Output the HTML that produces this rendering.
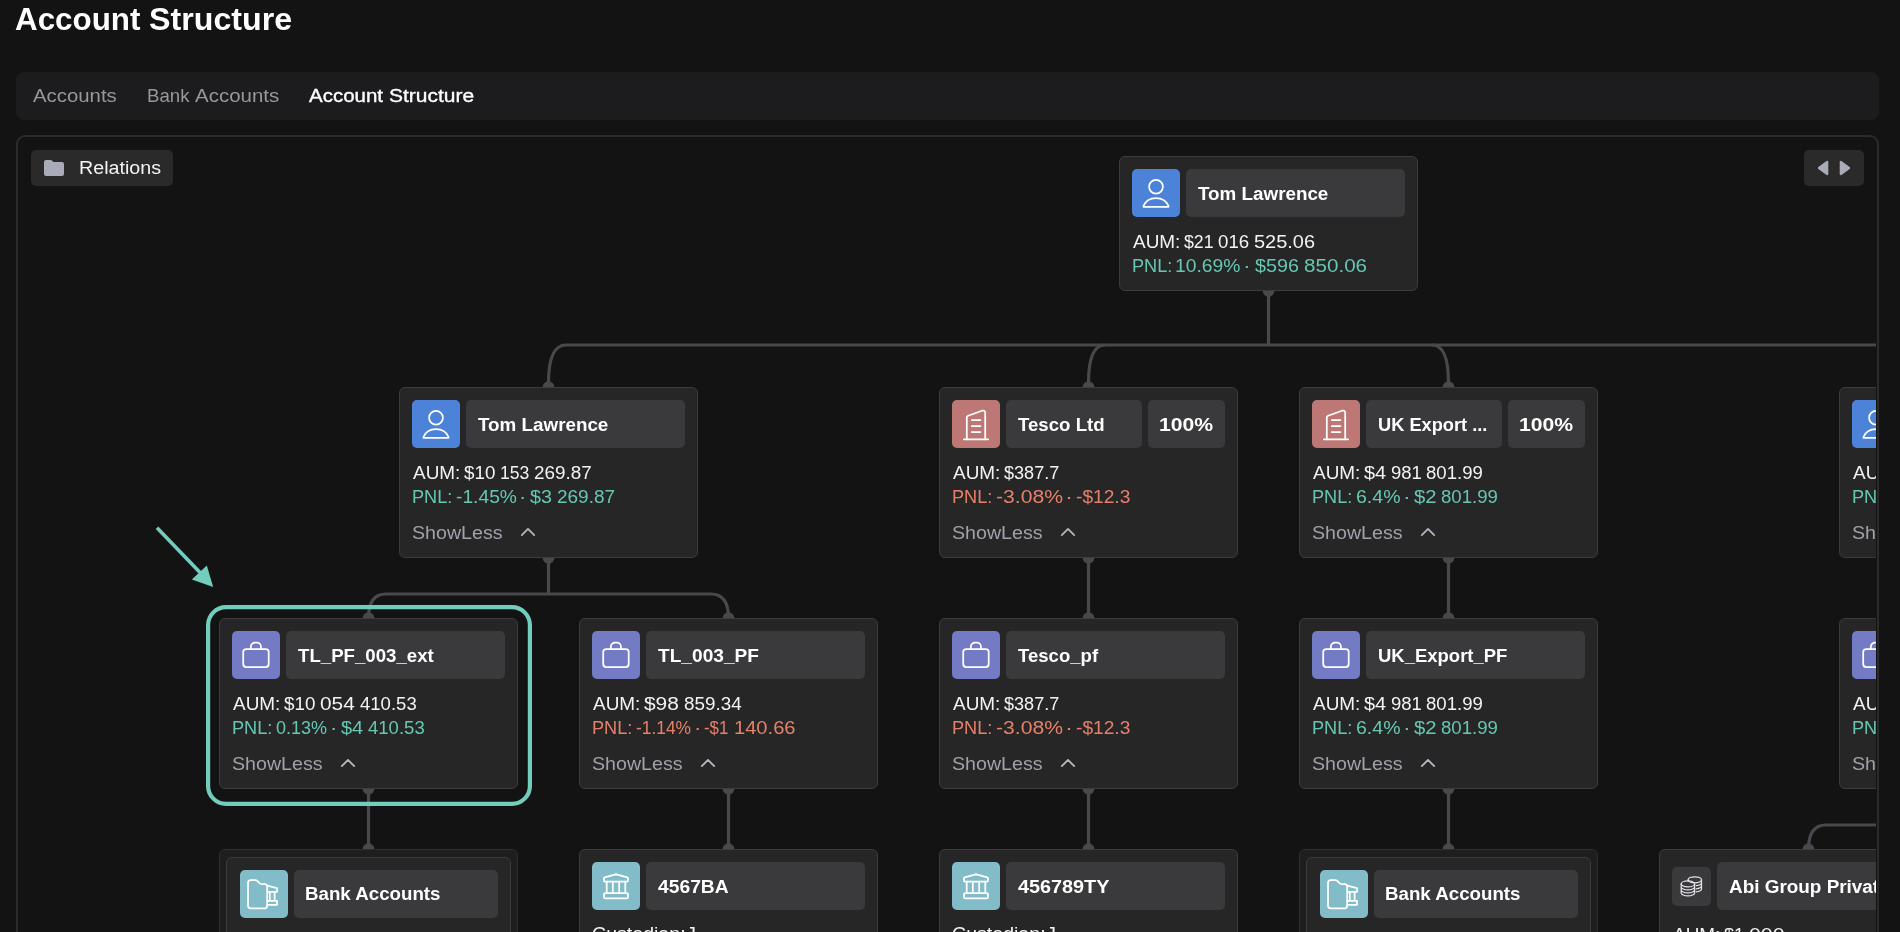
<!DOCTYPE html>
<html><head><meta charset="utf-8"><title>Account Structure</title>
<style>
*{box-sizing:border-box}
html,body{margin:0;padding:0}
body{width:1900px;height:932px;overflow:hidden;background:#131313;font-family:"Liberation Sans",sans-serif;color:#f3f3f3;position:relative}
#root{position:absolute;left:0;top:0;width:1900px;height:932px;overflow:hidden;will-change:transform}
.tx{position:absolute;white-space:nowrap;transform-origin:0 50%}
.tabs{position:absolute;left:16px;top:72px;width:1863px;height:48px;background:#1c1c1e;border-radius:8px}
.panel{position:absolute;left:16px;top:135px;width:1863px;height:830px;border:2px solid #2b2b2d;border-radius:9px;overflow:hidden}
.inner{position:absolute;left:0;top:0;width:1858px;height:826px;overflow:hidden}
.btn{position:absolute;height:36px;background:#2a2a2b;border-radius:5px}
.links{position:absolute;left:0;top:0}
.card{position:absolute;width:299px;background:#262627;border:1px solid #3c3c3f;border-radius:6px;overflow:hidden}
.grp{position:absolute;width:299px;height:171px;background:#1e1e1f;border:1px solid #2e2e30;border-radius:6px}
.ic{position:absolute;left:12px;top:12px;width:48px;height:48px;border-radius:5px}
.ic svg{display:block}
.ic.sm{width:39px;height:39px;top:17px;background:#3a3a3c;border-radius:5px}
.nm{position:absolute;left:66px;top:12px;height:48px;background:#3a3a3c;border-radius:5px}
.w{color:#fff}
.aum{color:#f3f3f3}
.g{color:#66c7b2}
.r{color:#e6806a}
.sl{color:#a0a1ab}
.tab{color:#97979d}
.chev{position:absolute;left:120px;top:139px}
.ann{position:absolute;left:0;top:0}
</style></head>
<body>
<div id="root">
<div class="tx w" style="left:15.30px;top:0px;font-size:31px;line-height:40px;font-weight:700;transform:scaleX(1.0117);">Account</div><div class="tx w" style="left:149.01px;top:0px;font-size:31px;line-height:40px;font-weight:700;transform:scaleX(1.0384);">Structure</div>
<div class="tabs"><div class="tx tab" style="left:17.20px;top:0px;font-size:18px;line-height:48px;font-weight:400;transform:scaleX(1.1308);">Accounts</div><div class="tx tab" style="left:130.65px;top:0px;font-size:18px;line-height:48px;font-weight:400;transform:scaleX(1.0353);">Bank</div><div class="tx tab" style="left:178.60px;top:0px;font-size:18px;line-height:48px;font-weight:400;transform:scaleX(1.1376);">Accounts</div><div class="tx w" style="left:293.10px;top:0px;font-size:18px;line-height:48px;font-weight:400;transform:scaleX(1.1387);-webkit-text-stroke:.35px #fff;">Account</div><div class="tx w" style="left:372.67px;top:0px;font-size:18px;line-height:48px;font-weight:400;transform:scaleX(1.1650);-webkit-text-stroke:.35px #fff;">Structure</div></div>
<div class="panel">
<div class="inner">
<svg class="links" width="1860" height="800" viewBox="0 0 1860 800" fill="none" stroke="#49494d" stroke-width="3.2"><path d="M1250.5 154 V208"/><path d="M530.5 250 V246 Q530.5 208 548 208 H1862"/><path d="M1070.5 250 V246 Q1070.5 208 1087 208"/><path d="M1430.5 250 V246 Q1430.5 208 1414 208"/><path d="M530.5 421 V457"/><path d="M350.5 481 Q350.5 457 368 457 H693 Q710.5 457 710.5 481"/><path d="M1070.5 421 V481"/><path d="M1430.5 421 V481"/><path d="M350.5 652 V712"/><path d="M710.5 652 V712"/><path d="M1070.5 652 V712"/><path d="M1430.5 652 V712"/><path d="M1790.5 712 Q1790.5 688 1808 688 H1862"/><circle cx="1250.5" cy="154" r="5.8" fill="#49494d" stroke="none"/><circle cx="530.5" cy="250" r="5.8" fill="#49494d" stroke="none"/><circle cx="1070.5" cy="250" r="5.8" fill="#49494d" stroke="none"/><circle cx="1430.5" cy="250" r="5.8" fill="#49494d" stroke="none"/><circle cx="530.5" cy="421" r="5.8" fill="#49494d" stroke="none"/><circle cx="1070.5" cy="421" r="5.8" fill="#49494d" stroke="none"/><circle cx="1430.5" cy="421" r="5.8" fill="#49494d" stroke="none"/><circle cx="350.5" cy="481" r="5.8" fill="#49494d" stroke="none"/><circle cx="710.5" cy="481" r="5.8" fill="#49494d" stroke="none"/><circle cx="1070.5" cy="481" r="5.8" fill="#49494d" stroke="none"/><circle cx="1430.5" cy="481" r="5.8" fill="#49494d" stroke="none"/><circle cx="350.5" cy="652" r="5.8" fill="#49494d" stroke="none"/><circle cx="710.5" cy="652" r="5.8" fill="#49494d" stroke="none"/><circle cx="1070.5" cy="652" r="5.8" fill="#49494d" stroke="none"/><circle cx="1430.5" cy="652" r="5.8" fill="#49494d" stroke="none"/><circle cx="350.5" cy="712" r="5.8" fill="#49494d" stroke="none"/><circle cx="710.5" cy="712" r="5.8" fill="#49494d" stroke="none"/><circle cx="1070.5" cy="712" r="5.8" fill="#49494d" stroke="none"/><circle cx="1430.5" cy="712" r="5.8" fill="#49494d" stroke="none"/><circle cx="1790.5" cy="712" r="5.8" fill="#49494d" stroke="none"/></svg>
<div class="card" style="left:1101px;top:19px;height:135px"><div class="ic" style="background:#4c82d8"><svg width="48" height="48" viewBox="0 0 48 48" fill="none" stroke="#fff" stroke-width="1.75" stroke-linecap="round" stroke-linejoin="round"><circle cx="24" cy="17.8" r="6.9"/><path d="M11.6 37.9 Q11.3 37.9 11.4 37 C13.5 32 18.5 29 24 29 C29.5 29 34.5 32 36.6 37 Q36.7 37.9 36.4 37.9 Z"/></svg></div><div class="nm" style="width:219px"></div><div class="tx w" style="left:78.49px;top:12.6px;font-size:18px;line-height:48px;font-weight:700;transform:scaleX(1.0452);">Tom Lawrence</div><div class="tx aum" style="left:12.60px;top:73px;font-size:18px;line-height:24px;font-weight:400;transform:scaleX(1.0530);">AUM:</div><div class="tx aum" style="left:63.70px;top:73px;font-size:18px;line-height:24px;font-weight:400;transform:scaleX(0.9863);">$21</div><div class="tx aum" style="left:98.27px;top:73px;font-size:18px;line-height:24px;font-weight:400;transform:scaleX(1.0385);">016</div><div class="tx aum" style="left:134.22px;top:73px;font-size:18px;line-height:24px;font-weight:400;transform:scaleX(1.1082);">525.06</div><div class="tx g" style="left:11.69px;top:97px;font-size:18px;line-height:24px;font-weight:400;transform:scaleX(1.0081);">PNL:</div><div class="tx g" style="left:55.11px;top:97px;font-size:18px;line-height:24px;font-weight:400;transform:scaleX(1.0711);">10.69%</div><div class="tx g" style="left:123.32px;top:97px;font-size:18px;line-height:24px;font-weight:400;transform:scaleX(1.2778);">·</div><div class="tx g" style="left:134.89px;top:97px;font-size:18px;line-height:24px;font-weight:400;transform:scaleX(1.0969);">$596</div><div class="tx g" style="left:184.20px;top:97px;font-size:18px;line-height:24px;font-weight:400;transform:scaleX(1.1455);">850.06</div></div>
<div class="card" style="left:381px;top:250px;height:171px"><div class="ic" style="background:#4c82d8"><svg width="48" height="48" viewBox="0 0 48 48" fill="none" stroke="#fff" stroke-width="1.75" stroke-linecap="round" stroke-linejoin="round"><circle cx="24" cy="17.8" r="6.9"/><path d="M11.6 37.9 Q11.3 37.9 11.4 37 C13.5 32 18.5 29 24 29 C29.5 29 34.5 32 36.6 37 Q36.7 37.9 36.4 37.9 Z"/></svg></div><div class="nm" style="width:219px"></div><div class="tx w" style="left:78.49px;top:12.6px;font-size:18px;line-height:48px;font-weight:700;transform:scaleX(1.0452);">Tom Lawrence</div><div class="tx aum" style="left:12.60px;top:73px;font-size:18px;line-height:24px;font-weight:400;transform:scaleX(1.0530);">AUM:</div><div class="tx aum" style="left:63.70px;top:73px;font-size:18px;line-height:24px;font-weight:400;transform:scaleX(1.0444);">$10</div><div class="tx aum" style="left:100.03px;top:73px;font-size:18px;line-height:24px;font-weight:400;transform:scaleX(0.9786);">153</div><div class="tx aum" style="left:133.66px;top:73px;font-size:18px;line-height:24px;font-weight:400;transform:scaleX(1.0488);">269.87</div><div class="tx g" style="left:11.69px;top:97px;font-size:18px;line-height:24px;font-weight:400;transform:scaleX(1.0081);">PNL:</div><div class="tx g" style="left:55.65px;top:97px;font-size:18px;line-height:24px;font-weight:400;transform:scaleX(1.0683);">-1.45%</div><div class="tx g" style="left:119.23px;top:97px;font-size:18px;line-height:24px;font-weight:400;transform:scaleX(1.2222);">·</div><div class="tx g" style="left:130.49px;top:97px;font-size:18px;line-height:24px;font-weight:400;transform:scaleX(1.0990);">$3</div><div class="tx g" style="left:157.05px;top:97px;font-size:18px;line-height:24px;font-weight:400;transform:scaleX(1.0544);">269.87</div><div class="tx sl" style="left:11.73px;top:133px;font-size:18px;line-height:24px;font-weight:400;transform:scaleX(1.0907);">ShowLess</div><svg class="chev" width="16" height="10" viewBox="0 0 16 10" fill="none" stroke="#b2b3bd" stroke-width="1.9" stroke-linecap="round" stroke-linejoin="round"><path d="M1.8 8.1 L8 1.9 L14.2 8.1"/></svg></div>
<div class="card" style="left:921px;top:250px;height:171px"><div class="ic" style="background:#bd7875"><svg width="48" height="48" viewBox="0 0 48 48" fill="none" stroke="#fff" stroke-width="1.75" stroke-linecap="round" stroke-linejoin="round"><path d="M14.8 39.3 V17.6 Q14.8 16.2 16.1 15.7 L30 10.7 Q33.2 9.8 33.2 13.2 V39.3"/><path d="M11.8 39.3 H36.2 M19.8 20 H28.4 M19.8 26 H28.4 M19.8 32 H28.4"/></svg></div><div class="nm" style="width:135.5px"></div><div class="nm" style="left:208px;width:77px"></div><div class="tx w" style="left:218.56px;top:12.6px;font-size:18px;line-height:48px;font-weight:700;transform:scaleX(1.1753);">100%</div><div class="tx w" style="left:78.49px;top:12.6px;font-size:18px;line-height:48px;font-weight:700;transform:scaleX(1.0352);">Tesco Ltd</div><div class="tx aum" style="left:12.60px;top:73px;font-size:18px;line-height:24px;font-weight:400;transform:scaleX(1.0530);">AUM:</div><div class="tx aum" style="left:63.70px;top:73px;font-size:18px;line-height:24px;font-weight:400;transform:scaleX(1.0037);">$387.7</div><div class="tx r" style="left:11.69px;top:97px;font-size:18px;line-height:24px;font-weight:400;transform:scaleX(1.0081);">PNL:</div><div class="tx r" style="left:55.56px;top:97px;font-size:18px;line-height:24px;font-weight:400;transform:scaleX(1.1745);">-3.08%</div><div class="tx r" style="left:124.80px;top:97px;font-size:18px;line-height:24px;font-weight:400;transform:scaleX(1.3333);">·</div><div class="tx r" style="left:135.65px;top:97px;font-size:18px;line-height:24px;font-weight:400;transform:scaleX(1.0646);">-$12.3</div><div class="tx sl" style="left:11.73px;top:133px;font-size:18px;line-height:24px;font-weight:400;transform:scaleX(1.0907);">ShowLess</div><svg class="chev" width="16" height="10" viewBox="0 0 16 10" fill="none" stroke="#b2b3bd" stroke-width="1.9" stroke-linecap="round" stroke-linejoin="round"><path d="M1.8 8.1 L8 1.9 L14.2 8.1"/></svg></div>
<div class="card" style="left:1281px;top:250px;height:171px"><div class="ic" style="background:#bd7875"><svg width="48" height="48" viewBox="0 0 48 48" fill="none" stroke="#fff" stroke-width="1.75" stroke-linecap="round" stroke-linejoin="round"><path d="M14.8 39.3 V17.6 Q14.8 16.2 16.1 15.7 L30 10.7 Q33.2 9.8 33.2 13.2 V39.3"/><path d="M11.8 39.3 H36.2 M19.8 20 H28.4 M19.8 26 H28.4 M19.8 32 H28.4"/></svg></div><div class="nm" style="width:135.5px"></div><div class="nm" style="left:208px;width:77px"></div><div class="tx w" style="left:218.56px;top:12.6px;font-size:18px;line-height:48px;font-weight:700;transform:scaleX(1.1753);">100%</div><div class="tx w" style="left:77.69px;top:12.6px;font-size:18px;line-height:48px;font-weight:700;transform:scaleX(1.0123);">UK Export ...</div><div class="tx aum" style="left:12.60px;top:73px;font-size:18px;line-height:24px;font-weight:400;transform:scaleX(1.0530);">AUM:</div><div class="tx aum" style="left:63.69px;top:73px;font-size:18px;line-height:24px;font-weight:400;transform:scaleX(1.1031);">$4</div><div class="tx aum" style="left:90.98px;top:73px;font-size:18px;line-height:24px;font-weight:400;transform:scaleX(1.0282);">981</div><div class="tx aum" style="left:125.98px;top:73px;font-size:18px;line-height:24px;font-weight:400;transform:scaleX(1.0318);">801.99</div><div class="tx g" style="left:11.69px;top:97px;font-size:18px;line-height:24px;font-weight:400;transform:scaleX(1.0081);">PNL:</div><div class="tx g" style="left:55.52px;top:97px;font-size:18px;line-height:24px;font-weight:400;transform:scaleX(1.0861);">6.4%</div><div class="tx g" style="left:102.92px;top:97px;font-size:18px;line-height:24px;font-weight:400;transform:scaleX(1.2778);">·</div><div class="tx g" style="left:114.29px;top:97px;font-size:18px;line-height:24px;font-weight:400;transform:scaleX(1.1257);">$2</div><div class="tx g" style="left:141.48px;top:97px;font-size:18px;line-height:24px;font-weight:400;transform:scaleX(1.0336);">801.99</div><div class="tx sl" style="left:11.73px;top:133px;font-size:18px;line-height:24px;font-weight:400;transform:scaleX(1.0907);">ShowLess</div><svg class="chev" width="16" height="10" viewBox="0 0 16 10" fill="none" stroke="#b2b3bd" stroke-width="1.9" stroke-linecap="round" stroke-linejoin="round"><path d="M1.8 8.1 L8 1.9 L14.2 8.1"/></svg></div>
<div class="card" style="left:1821px;top:250px;height:171px"><div class="ic" style="background:#4c82d8"><svg width="48" height="48" viewBox="0 0 48 48" fill="none" stroke="#fff" stroke-width="1.75" stroke-linecap="round" stroke-linejoin="round"><circle cx="24" cy="17.8" r="6.9"/><path d="M11.6 37.9 Q11.3 37.9 11.4 37 C13.5 32 18.5 29 24 29 C29.5 29 34.5 32 36.6 37 Q36.7 37.9 36.4 37.9 Z"/></svg></div><div class="nm" style="width:219px"></div><div class="tx w" style="left:78.49px;top:12.6px;font-size:18px;line-height:48px;font-weight:700;transform:scaleX(1.0452);">Tom Lawrence</div><div class="tx aum" style="left:12.60px;top:73px;font-size:18px;line-height:24px;font-weight:400;transform:scaleX(1.0530);">AUM:</div><div class="tx g" style="left:11.69px;top:97px;font-size:18px;line-height:24px;font-weight:400;transform:scaleX(1.0081);">PNL:</div><div class="tx sl" style="left:11.73px;top:133px;font-size:18px;line-height:24px;font-weight:400;transform:scaleX(1.0907);">ShowLess</div><svg class="chev" width="16" height="10" viewBox="0 0 16 10" fill="none" stroke="#b2b3bd" stroke-width="1.9" stroke-linecap="round" stroke-linejoin="round"><path d="M1.8 8.1 L8 1.9 L14.2 8.1"/></svg></div>
<div class="card" style="left:201px;top:481px;height:171px"><div class="ic" style="background:#737bc4"><svg width="48" height="48" viewBox="0 0 48 48" fill="none" stroke="#fff" stroke-width="1.75" stroke-linecap="round" stroke-linejoin="round"><rect x="11.2" y="18" width="25.5" height="18" rx="3"/><path d="M18.8 18 V15.9 A4.2 4.2 0 0 1 23 11.7 H24.8 A4.2 4.2 0 0 1 29 15.9 V18"/></svg></div><div class="nm" style="width:219px"></div><div class="tx w" style="left:78.49px;top:12.6px;font-size:18px;line-height:48px;font-weight:700;transform:scaleX(1.0360);">TL_PF_003_ext</div><div class="tx aum" style="left:12.60px;top:73px;font-size:18px;line-height:24px;font-weight:400;transform:scaleX(1.0530);">AUM:</div><div class="tx aum" style="left:63.70px;top:73px;font-size:18px;line-height:24px;font-weight:400;transform:scaleX(1.0444);">$10</div><div class="tx aum" style="left:100.49px;top:73px;font-size:18px;line-height:24px;font-weight:400;transform:scaleX(1.1562);">054</div><div class="tx aum" style="left:140.09px;top:73px;font-size:18px;line-height:24px;font-weight:400;transform:scaleX(1.0297);">410.53</div><div class="tx g" style="left:11.69px;top:97px;font-size:18px;line-height:24px;font-weight:400;transform:scaleX(1.0081);">PNL:</div><div class="tx g" style="left:55.80px;top:97px;font-size:18px;line-height:24px;font-weight:400;transform:scaleX(1.0020);">0.13%</div><div class="tx g" style="left:110.03px;top:97px;font-size:18px;line-height:24px;font-weight:400;transform:scaleX(1.2222);">·</div><div class="tx g" style="left:121.29px;top:97px;font-size:18px;line-height:24px;font-weight:400;transform:scaleX(1.1082);">$4</div><div class="tx g" style="left:148.39px;top:97px;font-size:18px;line-height:24px;font-weight:400;transform:scaleX(1.0297);">410.53</div><div class="tx sl" style="left:11.73px;top:133px;font-size:18px;line-height:24px;font-weight:400;transform:scaleX(1.0907);">ShowLess</div><svg class="chev" width="16" height="10" viewBox="0 0 16 10" fill="none" stroke="#b2b3bd" stroke-width="1.9" stroke-linecap="round" stroke-linejoin="round"><path d="M1.8 8.1 L8 1.9 L14.2 8.1"/></svg></div>
<div class="card" style="left:561px;top:481px;height:171px"><div class="ic" style="background:#737bc4"><svg width="48" height="48" viewBox="0 0 48 48" fill="none" stroke="#fff" stroke-width="1.75" stroke-linecap="round" stroke-linejoin="round"><rect x="11.2" y="18" width="25.5" height="18" rx="3"/><path d="M18.8 18 V15.9 A4.2 4.2 0 0 1 23 11.7 H24.8 A4.2 4.2 0 0 1 29 15.9 V18"/></svg></div><div class="nm" style="width:219px"></div><div class="tx w" style="left:78.49px;top:12.6px;font-size:18px;line-height:48px;font-weight:700;transform:scaleX(1.0626);">TL_003_PF</div><div class="tx aum" style="left:12.60px;top:73px;font-size:18px;line-height:24px;font-weight:400;transform:scaleX(1.0530);">AUM:</div><div class="tx aum" style="left:63.68px;top:73px;font-size:18px;line-height:24px;font-weight:400;transform:scaleX(1.1610);">$98</div><div class="tx aum" style="left:103.57px;top:73px;font-size:18px;line-height:24px;font-weight:400;transform:scaleX(1.0465);">859.34</div><div class="tx r" style="left:11.69px;top:97px;font-size:18px;line-height:24px;font-weight:400;transform:scaleX(1.0081);">PNL:</div><div class="tx r" style="left:55.73px;top:97px;font-size:18px;line-height:24px;font-weight:400;transform:scaleX(0.9658);">-1.14%</div><div class="tx r" style="left:113.63px;top:97px;font-size:18px;line-height:24px;font-weight:400;transform:scaleX(1.2222);">·</div><div class="tx r" style="left:124.26px;top:97px;font-size:18px;line-height:24px;font-weight:400;transform:scaleX(0.9303);">-$1</div><div class="tx r" style="left:153.55px;top:97px;font-size:18px;line-height:24px;font-weight:400;transform:scaleX(1.1170);">140.66</div><div class="tx sl" style="left:11.73px;top:133px;font-size:18px;line-height:24px;font-weight:400;transform:scaleX(1.0907);">ShowLess</div><svg class="chev" width="16" height="10" viewBox="0 0 16 10" fill="none" stroke="#b2b3bd" stroke-width="1.9" stroke-linecap="round" stroke-linejoin="round"><path d="M1.8 8.1 L8 1.9 L14.2 8.1"/></svg></div>
<div class="card" style="left:921px;top:481px;height:171px"><div class="ic" style="background:#737bc4"><svg width="48" height="48" viewBox="0 0 48 48" fill="none" stroke="#fff" stroke-width="1.75" stroke-linecap="round" stroke-linejoin="round"><rect x="11.2" y="18" width="25.5" height="18" rx="3"/><path d="M18.8 18 V15.9 A4.2 4.2 0 0 1 23 11.7 H24.8 A4.2 4.2 0 0 1 29 15.9 V18"/></svg></div><div class="nm" style="width:219px"></div><div class="tx w" style="left:78.49px;top:12.6px;font-size:18px;line-height:48px;font-weight:700;transform:scaleX(1.0309);">Tesco_pf</div><div class="tx aum" style="left:12.60px;top:73px;font-size:18px;line-height:24px;font-weight:400;transform:scaleX(1.0530);">AUM:</div><div class="tx aum" style="left:63.70px;top:73px;font-size:18px;line-height:24px;font-weight:400;transform:scaleX(1.0037);">$387.7</div><div class="tx r" style="left:11.69px;top:97px;font-size:18px;line-height:24px;font-weight:400;transform:scaleX(1.0081);">PNL:</div><div class="tx r" style="left:55.56px;top:97px;font-size:18px;line-height:24px;font-weight:400;transform:scaleX(1.1745);">-3.08%</div><div class="tx r" style="left:124.80px;top:97px;font-size:18px;line-height:24px;font-weight:400;transform:scaleX(1.3333);">·</div><div class="tx r" style="left:135.65px;top:97px;font-size:18px;line-height:24px;font-weight:400;transform:scaleX(1.0646);">-$12.3</div><div class="tx sl" style="left:11.73px;top:133px;font-size:18px;line-height:24px;font-weight:400;transform:scaleX(1.0907);">ShowLess</div><svg class="chev" width="16" height="10" viewBox="0 0 16 10" fill="none" stroke="#b2b3bd" stroke-width="1.9" stroke-linecap="round" stroke-linejoin="round"><path d="M1.8 8.1 L8 1.9 L14.2 8.1"/></svg></div>
<div class="card" style="left:1281px;top:481px;height:171px"><div class="ic" style="background:#737bc4"><svg width="48" height="48" viewBox="0 0 48 48" fill="none" stroke="#fff" stroke-width="1.75" stroke-linecap="round" stroke-linejoin="round"><rect x="11.2" y="18" width="25.5" height="18" rx="3"/><path d="M18.8 18 V15.9 A4.2 4.2 0 0 1 23 11.7 H24.8 A4.2 4.2 0 0 1 29 15.9 V18"/></svg></div><div class="nm" style="width:219px"></div><div class="tx w" style="left:77.67px;top:12.6px;font-size:18px;line-height:48px;font-weight:700;transform:scaleX(1.0265);">UK_Export_PF</div><div class="tx aum" style="left:12.60px;top:73px;font-size:18px;line-height:24px;font-weight:400;transform:scaleX(1.0530);">AUM:</div><div class="tx aum" style="left:63.69px;top:73px;font-size:18px;line-height:24px;font-weight:400;transform:scaleX(1.1031);">$4</div><div class="tx aum" style="left:90.98px;top:73px;font-size:18px;line-height:24px;font-weight:400;transform:scaleX(1.0282);">981</div><div class="tx aum" style="left:125.98px;top:73px;font-size:18px;line-height:24px;font-weight:400;transform:scaleX(1.0318);">801.99</div><div class="tx g" style="left:11.69px;top:97px;font-size:18px;line-height:24px;font-weight:400;transform:scaleX(1.0081);">PNL:</div><div class="tx g" style="left:55.52px;top:97px;font-size:18px;line-height:24px;font-weight:400;transform:scaleX(1.0861);">6.4%</div><div class="tx g" style="left:102.92px;top:97px;font-size:18px;line-height:24px;font-weight:400;transform:scaleX(1.2778);">·</div><div class="tx g" style="left:114.29px;top:97px;font-size:18px;line-height:24px;font-weight:400;transform:scaleX(1.1257);">$2</div><div class="tx g" style="left:141.48px;top:97px;font-size:18px;line-height:24px;font-weight:400;transform:scaleX(1.0336);">801.99</div><div class="tx sl" style="left:11.73px;top:133px;font-size:18px;line-height:24px;font-weight:400;transform:scaleX(1.0907);">ShowLess</div><svg class="chev" width="16" height="10" viewBox="0 0 16 10" fill="none" stroke="#b2b3bd" stroke-width="1.9" stroke-linecap="round" stroke-linejoin="round"><path d="M1.8 8.1 L8 1.9 L14.2 8.1"/></svg></div>
<div class="card" style="left:1821px;top:481px;height:171px"><div class="ic" style="background:#737bc4"><svg width="48" height="48" viewBox="0 0 48 48" fill="none" stroke="#fff" stroke-width="1.75" stroke-linecap="round" stroke-linejoin="round"><rect x="11.2" y="18" width="25.5" height="18" rx="3"/><path d="M18.8 18 V15.9 A4.2 4.2 0 0 1 23 11.7 H24.8 A4.2 4.2 0 0 1 29 15.9 V18"/></svg></div><div class="nm" style="width:219px"></div><div class="tx w" style="left:78.28px;top:12.6px;font-size:18px;line-height:48px;font-weight:700;transform:scaleX(1.0400);">Abi_PF</div><div class="tx aum" style="left:12.60px;top:73px;font-size:18px;line-height:24px;font-weight:400;transform:scaleX(1.0530);">AUM:</div><div class="tx g" style="left:11.69px;top:97px;font-size:18px;line-height:24px;font-weight:400;transform:scaleX(1.0081);">PNL:</div><div class="tx sl" style="left:11.73px;top:133px;font-size:18px;line-height:24px;font-weight:400;transform:scaleX(1.0907);">ShowLess</div><svg class="chev" width="16" height="10" viewBox="0 0 16 10" fill="none" stroke="#b2b3bd" stroke-width="1.9" stroke-linecap="round" stroke-linejoin="round"><path d="M1.8 8.1 L8 1.9 L14.2 8.1"/></svg></div>
<div class="card" style="left:561px;top:712px;height:171px"><div class="ic" style="background:#82bcc8"><svg width="48" height="48" viewBox="0 0 48 48" fill="none" stroke="#fff" stroke-width="1.75" stroke-linecap="round" stroke-linejoin="round"><path d="M12.6 15.3 L24 12.3 L35.4 15.3 Q36 15.5 36 16.2 V18.8 Q36 19.7 35.1 19.7 H12.9 Q12 19.7 12 18.8 V16.2 Q12 15.5 12.6 15.3 Z"/><path d="M14.7 19.7 V31.2 M20.8 19.7 V31.2 M27.2 19.7 V31.2 M33.3 19.7 V31.2"/><rect x="12" y="31.2" width="24" height="5.1" rx="1.2"/><circle cx="24" cy="12" r="0.9" fill="#fff" stroke="none"/></svg></div><div class="nm" style="width:219px"></div><div class="tx w" style="left:78.49px;top:12.6px;font-size:18px;line-height:48px;font-weight:700;transform:scaleX(1.0703);">4567BA</div><div class="tx aum" style="left:12.22px;top:72px;font-size:18px;line-height:24px;font-weight:400;transform:scaleX(1.0873);">Custodian:</div><div class="tx aum" style="left:105.98px;top:72px;font-size:18px;line-height:24px;font-weight:400;transform:scaleX(1.1067);">J</div></div>
<div class="card" style="left:921px;top:712px;height:171px"><div class="ic" style="background:#82bcc8"><svg width="48" height="48" viewBox="0 0 48 48" fill="none" stroke="#fff" stroke-width="1.75" stroke-linecap="round" stroke-linejoin="round"><path d="M12.6 15.3 L24 12.3 L35.4 15.3 Q36 15.5 36 16.2 V18.8 Q36 19.7 35.1 19.7 H12.9 Q12 19.7 12 18.8 V16.2 Q12 15.5 12.6 15.3 Z"/><path d="M14.7 19.7 V31.2 M20.8 19.7 V31.2 M27.2 19.7 V31.2 M33.3 19.7 V31.2"/><rect x="12" y="31.2" width="24" height="5.1" rx="1.2"/><circle cx="24" cy="12" r="0.9" fill="#fff" stroke="none"/></svg></div><div class="nm" style="width:219px"></div><div class="tx w" style="left:78.48px;top:12.6px;font-size:18px;line-height:48px;font-weight:700;transform:scaleX(1.1004);">456789TY</div><div class="tx aum" style="left:12.22px;top:72px;font-size:18px;line-height:24px;font-weight:400;transform:scaleX(1.0873);">Custodian:</div><div class="tx aum" style="left:105.98px;top:72px;font-size:18px;line-height:24px;font-weight:400;transform:scaleX(1.1067);">J</div></div>
<div class="grp" style="left:201px;top:712px"><div class="card" style="left:6px;top:7px;height:150px;width:284.5px"><div class="ic" style="left:13px;background:#82bcc8"><svg width="48" height="48" viewBox="0 0 48 48" fill="none" stroke="#fff" stroke-width="1.75" stroke-linecap="round" stroke-linejoin="round"><path d="M8 12.8 A2.8 2.8 0 0 1 10.8 10 H15.6 C18.4 10 18.4 14 21.4 14 H24.6 A2.6 2.6 0 0 1 27.2 16.6 V35.7 A2.6 2.6 0 0 1 24.6 38.3 H10.8 A2.8 2.8 0 0 1 8 35.5 Z"/><path d="M27.2 15.6 L37 18.2 V21.8 H27.2 M29.8 22 V30.8 M34.6 22 V30.8 M27.2 30.8 H37 V34.8 H27.2"/></svg></div><div class="nm" style="left:67px;width:204px"></div><div class="tx w" style="left:78.45px;top:11.7px;font-size:18px;line-height:48px;font-weight:700;transform:scaleX(1.0389);">Bank Accounts</div></div></div>
<div class="grp" style="left:1281px;top:712px"><div class="card" style="left:6px;top:7px;height:150px;width:284.5px"><div class="ic" style="left:13px;background:#82bcc8"><svg width="48" height="48" viewBox="0 0 48 48" fill="none" stroke="#fff" stroke-width="1.75" stroke-linecap="round" stroke-linejoin="round"><path d="M8 12.8 A2.8 2.8 0 0 1 10.8 10 H15.6 C18.4 10 18.4 14 21.4 14 H24.6 A2.6 2.6 0 0 1 27.2 16.6 V35.7 A2.6 2.6 0 0 1 24.6 38.3 H10.8 A2.8 2.8 0 0 1 8 35.5 Z"/><path d="M27.2 15.6 L37 18.2 V21.8 H27.2 M29.8 22 V30.8 M34.6 22 V30.8 M27.2 30.8 H37 V34.8 H27.2"/></svg></div><div class="nm" style="left:67px;width:204px"></div><div class="tx w" style="left:78.45px;top:11.7px;font-size:18px;line-height:48px;font-weight:700;transform:scaleX(1.0389);">Bank Accounts</div></div></div>
<div class="card" style="left:1641px;top:712px;height:171px"><div class="ic sm"><svg width="39" height="39" viewBox="0.5 0.5 39 39" fill="none" stroke="#e2e2ea" stroke-width="1.25" stroke-linecap="round" stroke-linejoin="round"><ellipse cx="23.3" cy="13.3" rx="6.7" ry="3"/><path d="M30 13.3 V22.3 C30 24 27.6 25.2 24.6 25.3 M30 16.3 C30 17.6 28 18.8 24.8 19.2 M30 19.3 C30 20.6 28 21.9 24.8 22.3 M16.6 13.3 V14.6"/><ellipse cx="16.4" cy="17.4" rx="6.7" ry="3"/><path d="M9.7 17.4 V26.4 C9.7 28 12.7 29.4 16.4 29.4 C20.1 29.4 23.1 28 23.1 26.4 V17.4 M9.7 20.4 C9.7 22 12.7 23.4 16.4 23.4 C20.1 23.4 23.1 22 23.1 20.4 M9.7 23.4 C9.7 25 12.7 26.4 16.4 26.4 C20.1 26.4 23.1 25 23.1 23.4"/></svg></div><div class="nm" style="left:57px;width:228px"></div><div class="tx w" style="left:69.18px;top:12.6px;font-size:18px;line-height:48px;font-weight:700;transform:scaleX(1.0500);">Abi Group Private</div><div class="tx aum" style="left:12.60px;top:73px;font-size:18px;line-height:24px;font-weight:400;transform:scaleX(1.0530);">AUM:</div><div class="tx aum" style="left:63.70px;top:73px;font-size:18px;line-height:24px;font-weight:400;transform:scaleX(1.0105);">$1</div><div class="tx aum" style="left:88.77px;top:73px;font-size:18px;line-height:24px;font-weight:400;transform:scaleX(1.1847);">000</div></div>
</div>
<div class="btn" style="left:13px;top:13px;width:142px"><svg style="position:absolute;left:13px;top:10px" width="20" height="16" viewBox="0 0 20 16"><path d="M0 2 A2 2 0 0 1 2 0 H6.6 Q7.6 0 8.4 .9 L9 1.5 Q9.5 2 10.4 2 H18 A2 2 0 0 1 20 4 V14 A2 2 0 0 1 18 16 H2 A2 2 0 0 1 0 14 Z" fill="#a9abb8"/></svg><div class="tx aum" style="left:47.77px;top:1.1px;font-size:18px;line-height:35.5px;font-weight:400;transform:scaleX(1.0932);">Relations</div></div>
<div class="btn" style="left:1786px;top:13px;width:60px"><svg style="position:absolute;left:0;top:0" width="60" height="36" viewBox="0 0 60 36"><path d="M15 18 L23.2 11.9 V24.1 Z M45 18 L36.8 11.9 V24.1 Z" fill="#a9abb8" stroke="#a9abb8" stroke-width="2.2" stroke-linejoin="round"/></svg></div>
</div>
<svg class="ann" width="1900" height="932" viewBox="0 0 1900 932" fill="none"><rect x="208.1" y="607.1" width="321.8" height="196.8" rx="18" stroke="#72cdbc" stroke-width="4.2"/><path d="M157 527.8 L200 572.5" stroke="#72cdbc" stroke-width="3.6"/><path d="M213.2 586.9 L206.8 565.5 L191.8 579.5 Z" fill="#72cdbc"/></svg>
</div>
</body></html>
